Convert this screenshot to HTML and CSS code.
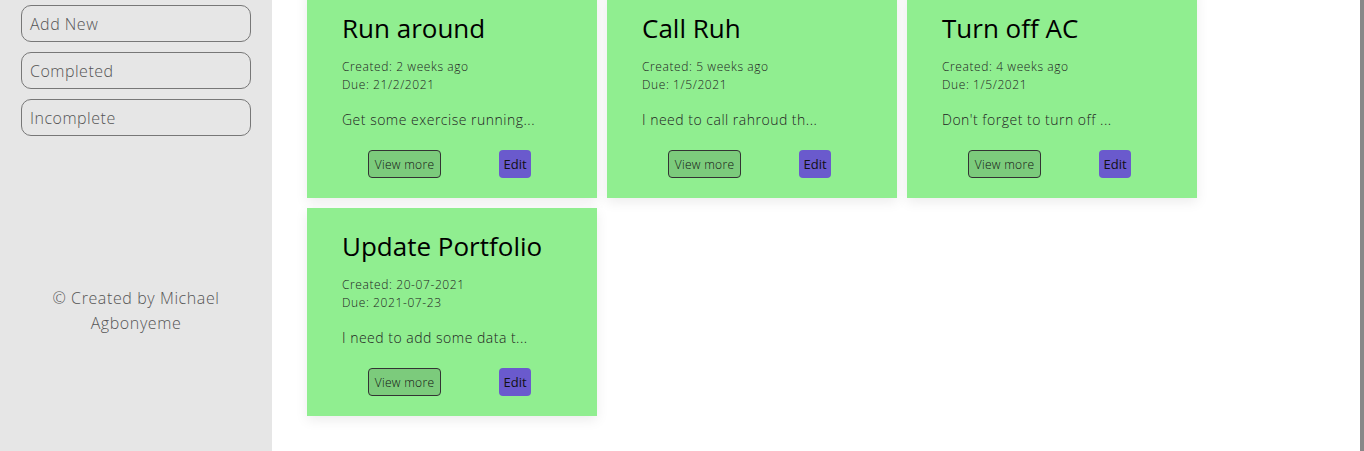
FILE: index.html
```html
<!DOCTYPE html>
<html lang="en">
<head>
<meta charset="utf-8">
<title>Todo</title>
<link rel="stylesheet" href="styles.css">
</head>
<body>
<div class="app">
  <aside class="sidebar">
    <nav class="menu">
      <button class="menu-btn">Add New</button>
      <button class="menu-btn">Completed</button>
      <button class="menu-btn">Incomplete</button>
    </nav>
    <p class="credit">© Created by Michael Agbonyeme</p>
  </aside>
  <main class="main">
    <section class="cards">
      <article class="card">
        <h2 class="card-title">Run around</h2>
        <p class="meta">Created: 2 weeks ago<br>Due: 21/2/2021</p>
        <p class="desc">Get some exercise running...</p>
        <div class="actions"><button class="view">View more</button><button class="edit">Edit</button></div>
      </article>
      <article class="card">
        <h2 class="card-title">Call Ruh</h2>
        <p class="meta">Created: 5 weeks ago<br>Due: 1/5/2021</p>
        <p class="desc">I need to call rahroud th...</p>
        <div class="actions"><button class="view">View more</button><button class="edit">Edit</button></div>
      </article>
      <article class="card">
        <h2 class="card-title">Turn off AC</h2>
        <p class="meta">Created: 4 weeks ago<br>Due: 1/5/2021</p>
        <p class="desc">Don't forget to turn off ...</p>
        <div class="actions"><button class="view">View more</button><button class="edit">Edit</button></div>
      </article>
      <article class="card">
        <h2 class="card-title">Update Portfolio</h2>
        <p class="meta">Created: 20-07-2021<br>Due: 2021-07-23</p>
        <p class="desc">I need to add some data t...</p>
        <div class="actions"><button class="view">View more</button><button class="edit">Edit</button></div>
      </article>
    </section>
  </main>
</div>
</body>
</html>
```
FILE: styles.css
```css
* { box-sizing: border-box; }
html, body { margin: 0; padding: 0; height: 100%; overflow: hidden; }
body {
  font-family: "Open Sans", "Liberation Sans", sans-serif;
  background: #fff;
  color: #000;
}
.app {
  display: flex;
  height: 451px;
}
.sidebar {
  width: 272px;
  flex: none;
  background: #e6e6e6;
  display: flex;
  flex-direction: column;
  padding: 5px 21px 0;
}
.menu {
  display: flex;
  flex-direction: column;
  gap: 10px;
}
.menu-btn {
  height: 37px;
  width: 230px;
  text-align: left;
  padding: 0 0 0 8px;
  font-family: inherit;
  font-size: 16px;
  font-weight: 300;
  letter-spacing: 0.5px;
  color: #555;
  background: #e6e6e6;
  border: 1px solid #777;
  border-radius: 10px;
}
.credit {
  margin: 150px 0 0;
  text-align: center;
  font-size: 16px;
  font-weight: 300;
  letter-spacing: 0.6px;
  line-height: 25px;
  color: #555;
  padding: 0 10px;
}
.main {
  flex: 1;
  border-right: 4px solid #888;
  padding: 0 35px;
}
.cards {
  margin-top: -10px;
  display: grid;
  grid-template-columns: repeat(3, 290px);
  gap: 10px;
}
.card {
  height: 208px;
  background: #90ee90;
  box-shadow: 0 4px 12px rgba(0, 0, 0, 0.08);
  padding: 21px 35px 0;
}
.card-title {
  margin: 0;
  font-size: 26px;
  font-weight: 400;
  line-height: 34px;
  color: #000;
}
.meta {
  margin: 13px 0 0;
  font-size: 12px;
  font-weight: 300;
  letter-spacing: 0.6px;
  line-height: 18px;
  color: #222;
}
.desc {
  margin: 16px 0 0;
  font-size: 14px;
  font-weight: 300;
  letter-spacing: 0.5px;
  line-height: 20px;
  color: #222;
}
.actions {
  margin: 20px 2px 0 -3px;
  display: flex;
  justify-content: space-around;
  align-items: center;
}
.view, .edit {
  height: 28px;
  font-family: inherit;
  font-size: 12px;
  font-weight: 300;
  color: #111;
  padding: 0;
}
.view {
  width: 73px;
  background: #7ccb7c;
  border: 1px solid #333;
  border-radius: 4px;
  letter-spacing: 0.3px;
}
.edit {
  width: 32px;
  background: #6a5acd;
  border: none;
  border-radius: 4px;
  font-size: 13px;
  font-weight: 400;
}
```
